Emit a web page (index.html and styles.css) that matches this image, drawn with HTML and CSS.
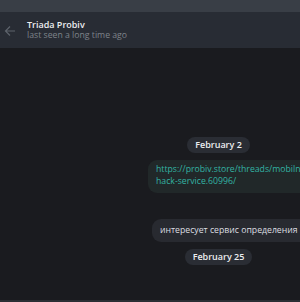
FILE: index.html
```html
<!DOCTYPE html>
<html lang="en">
<head>
<meta charset="UTF-8">
<title>Triada Probiv</title>
<link rel="stylesheet" href="styles.css">
</head>
<body>
<div class="topstrip"></div>
<div class="header">
    <svg class="back" width="12" height="12" viewBox="0 0 12 12">
        <path d="M11 6H1.5M6 1.5L1.5 6L6 10.5" fill="none" stroke="#5d636b" stroke-width="1.2"/>
    </svg>
    <div class="peer">
        <div class="name">Triada Probiv</div>
        <div class="status">last seen a long time ago</div>
    </div>
</div>
<div class="feed">
    <div class="day first"><span class="pill">February 2</span></div>
    <div class="bubble link">https://probiv.store/threads/mobilnyj-probiv-<br>hack-service.60996/</div>
    <div class="bubble text">интересует сервис определения км по номеру телефона</div>
    <div class="day last"><span class="pill">February 25</span></div>
</div>
<div class="bottomline"></div>
</body>
</html>
```

FILE: styles.css
```css
html, body {
    margin: 0;
    padding: 0;
    height: 302px;
    overflow: hidden;
    background: #1a1b1f;
    font-family: "Open Sans", "Noto Sans", sans-serif;
    font-size: 8.7px;
}
.topstrip {
    height: 12px;
    background: #393e46;
}
.header {
    height: 36px;
    background: #282c34;
    display: flex;
    align-items: center;
}
.back {
    margin-left: 4px;
    margin-right: 11px;
    margin-top: 1px;
}
.name {
    color: #eceef0;
    font-weight: 600;
    font-size: 9px;
    line-height: 11px;
}
.status {
    color: #7e838a;
    line-height: 11px;
}
.feed {
    height: 252px;
    overflow: hidden;
    padding-left: 148px;
    display: flex;
    flex-direction: column;
    align-items: flex-start;
    white-space: nowrap;
}
.day {
    width: 141px;
    display: flex;
    justify-content: center;
}
.day.first {
    margin-top: 89px;
}
.day.last {
    margin-top: 7px;
}
.pill {
    display: inline-block;
    background: #2a2d34;
    color: #eceef0;
    font-weight: 600;
    font-size: 9px;
    line-height: 16px;
    height: 16px;
    padding: 0 8px;
    border-radius: 8px;
}
.bubble {
    color: #dcdee1;
    border-radius: 9px;
}
.link {
    margin-top: 7px;
    background: #212829;
    color: #33b3a3;
    padding: 3px 8px 6px 8px;
    line-height: 12px;
}
.text {
    margin-top: 26px;
    margin-left: 4px;
    background: #282a30;
    padding: 0 8px;
    line-height: 23px;
}
.bottomline {
    height: 2px;
    background: #2b2e34;
}
```
